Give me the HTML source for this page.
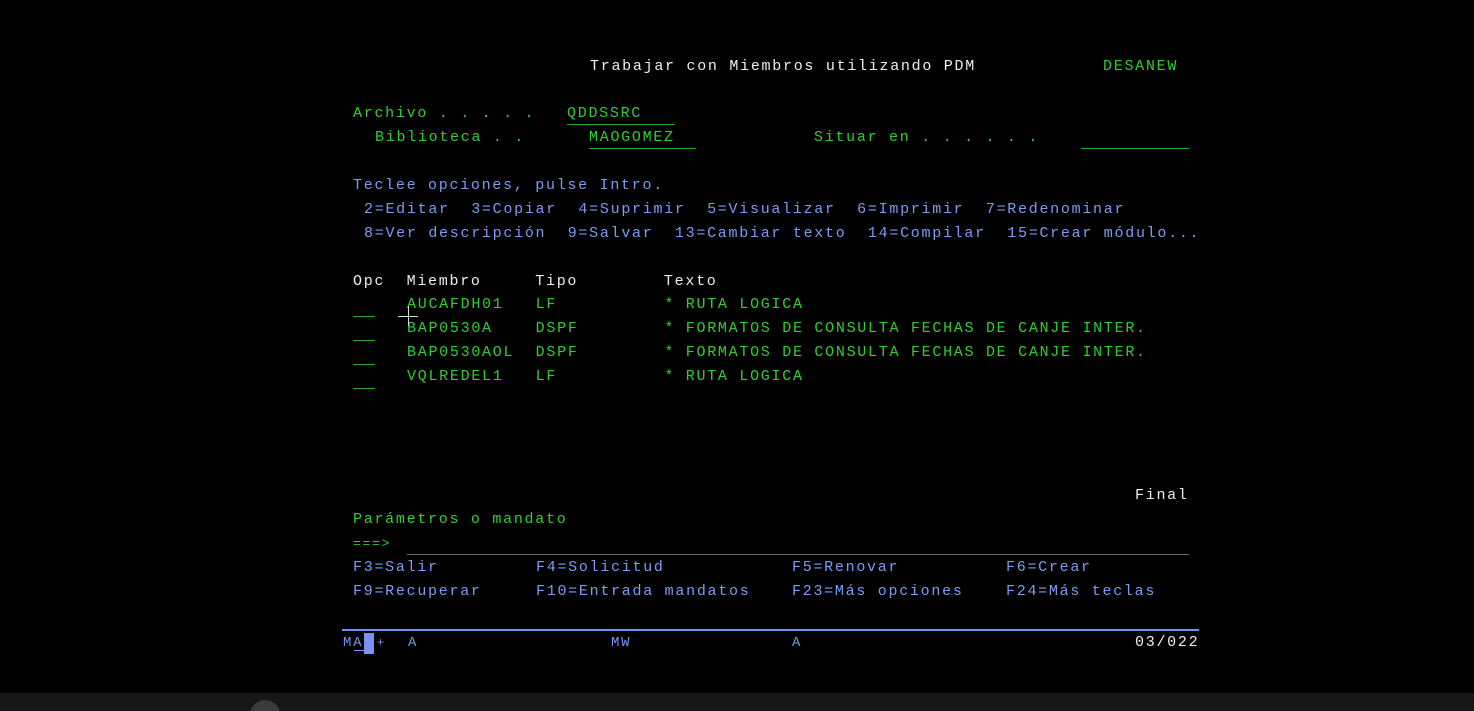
<!DOCTYPE html>
<html style="overflow:hidden;height:711px"><head><meta charset="utf-8"><style>
body{margin:0;width:1474px;height:711px;background:#000;overflow:hidden;position:relative;font-family:"Liberation Mono",monospace;}
.t{position:absolute;font-size:15px;line-height:18px;letter-spacing:1.72px;white-space:pre;}
.g{color:#33cc33}.b{color:#7d9cf2}.w{color:#eeeeee}.s{color:#7a92f0}
.u{position:absolute;height:1px;}
</style></head><body>
<div class="t w" style="left:590px;top:58px">Trabajar con Miembros utilizando PDM</div>
<div class="t g" style="left:1103px;top:58px">DESANEW</div>

<div class="t g" style="left:353px;top:105px">Archivo . . . . .</div>
<div class="t g" style="left:567px;top:105px">QDDSSRC</div>
<div class="u" style="left:567px;top:124px;width:108px;background:#2aa82a"></div>
<div class="t g" style="left:375px;top:129px">Biblioteca . .</div>
<div class="t g" style="left:589px;top:129px">MAOGOMEZ</div>
<div class="u" style="left:589px;top:148px;width:107px;background:#2aa82a"></div>
<div class="t g" style="left:814px;top:129px">Situar en . . . . . .</div>
<div class="u" style="left:1081px;top:148px;width:108px;background:#2aa82a"></div>

<div class="t b" style="left:353px;top:177px">Teclee opciones, pulse Intro.</div>
<div class="t b" style="left:364px;top:201px">2=Editar  3=Copiar  4=Suprimir  5=Visualizar  6=Imprimir  7=Redenominar</div>
<div class="t b" style="left:364px;top:225px">8=Ver descripción  9=Salvar  13=Cambiar texto  14=Compilar  15=Crear módulo...</div>

<div class="t w" style="left:353px;top:273px">Opc  Miembro     Tipo        Texto</div>
<div class="t g" style="left:407px;top:296px">AUCAFDH01   LF          * RUTA LOGICA</div>
<div class="t g" style="left:407px;top:320px">BAP0530A    DSPF        * FORMATOS DE CONSULTA FECHAS DE CANJE INTER.</div>
<div class="t g" style="left:407px;top:344px">BAP0530AOL  DSPF        * FORMATOS DE CONSULTA FECHAS DE CANJE INTER.</div>
<div class="t g" style="left:407px;top:368px">VQLREDEL1   LF          * RUTA LOGICA</div>
<div class="u" style="left:353px;top:316px;width:22px;background:#2aa82a"></div>
<div class="u" style="left:353px;top:340px;width:22px;background:#2aa82a"></div>
<div class="u" style="left:353px;top:364px;width:22px;background:#2aa82a"></div>
<div class="u" style="left:353px;top:388px;width:22px;background:#2aa82a"></div>
<div class="u" style="left:398px;top:316px;width:20px;background:#ddd"></div>
<div class="u" style="left:408px;top:306px;width:1px;height:20px;background:#ddd"></div>

<div class="t w" style="left:1135px;top:487px">Final</div>
<div class="t g" style="left:353px;top:511px">Parámetros o mandato</div>
<div class="t g" style="left:353px;top:535px;font-size:13px">===></div>
<div class="u" style="left:407px;top:554px;width:782px;background:#666"></div>

<div class="t b" style="left:353px;top:559px">F3=Salir</div>
<div class="t b" style="left:536px;top:559px">F4=Solicitud</div>
<div class="t b" style="left:792px;top:559px">F5=Renovar</div>
<div class="t b" style="left:1006px;top:559px">F6=Crear</div>
<div class="t b" style="left:353px;top:583px">F9=Recuperar</div>
<div class="t b" style="left:536px;top:583px">F10=Entrada mandatos</div>
<div class="t b" style="left:792px;top:583px">F23=Más opciones</div>
<div class="t b" style="left:1006px;top:583px">F24=Más teclas</div>

<div class="u" style="left:342px;top:629px;width:857px;height:2px;background:#6f8ff0"></div>
<div class="t s" style="left:343px;top:634px;font-size:14px">MA</div>
<div class="u" style="left:354px;top:650px;width:10px;background:#7a92f0"></div>
<div style="position:absolute;left:364px;top:633px;width:10px;height:21px;background:#7a92f0"></div>
<div class="t s" style="left:377px;top:634px;font-size:12px">+</div>
<div class="t s" style="left:408px;top:634px;font-size:14px">A</div>
<div class="t s" style="left:611px;top:634px;font-size:14px">MW</div>
<div class="t s" style="left:792px;top:634px;font-size:14px">A</div>
<div class="t w" style="left:1135px;top:634px">03/022</div>

<div style="position:absolute;left:0;top:693px;width:1474px;height:18px;background:#171717;overflow:hidden">
<div style="position:absolute;left:250px;top:7px;width:30px;height:30px;border-radius:50%;background:#3a3a3a"></div>
</div>
</body></html>
